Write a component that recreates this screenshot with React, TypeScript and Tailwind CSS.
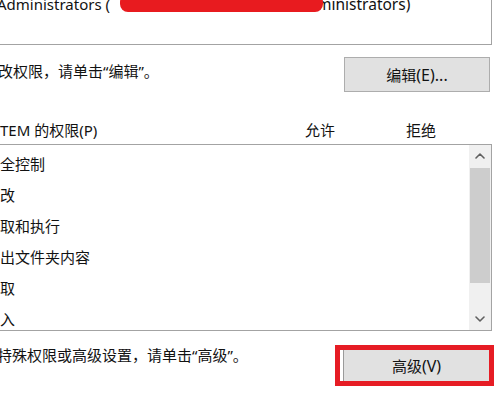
import React from "react";

const font = { fontFamily: '"Noto Sans", "Noto Sans CJK SC", sans-serif' };

function Chevron({ up }: { up?: boolean }) {
  return (
    <svg width="10" height="6" viewBox="0 0 10 6" fill="none">
      <path
        d={up ? "M1 5 L5 1 L9 5" : "M1 1 L5 5 L9 1"}
        stroke="#606060"
        strokeWidth="1.6"
        strokeLinecap="round"
        strokeLinejoin="round"
      />
    </svg>
  );
}

const perms = ["全控制", "改", "取和执行", "出文件夹内容", "取", "入"];

export default function App() {
  return (
    <div
      className="w-[500px] h-[400px] overflow-hidden bg-white text-[15px] text-[#121212]"
      style={font}
    >
      {/* owner box */}
      <div className="w-[492px] h-[45px] border-r border-b border-[#a3a3a3] overflow-hidden">
        <div className="flex items-start mt-[-6px] leading-[20px] whitespace-nowrap">
          <span className="w-[123px] ml-[-3px] shrink-0">Administrators (</span>
          <div className="relative z-10 w-[203px] h-[18px] shrink-0 bg-[#e81b1f] rounded-[8px]" />
          <span className="ml-[-6px] text-[15.5px]">ministrators)</span>
        </div>
      </div>

      {/* edit row */}
      <div className="flex items-start mt-[12px] h-[35px]">
        <span className="mt-[4px] ml-[-2px] leading-[20px] whitespace-nowrap">
          改权限，请单击“编辑”。
        </span>
        <div className="ml-auto mr-[10px] w-[146px] h-[35px] border border-[#adadad] bg-[#e1e1e1] flex items-center justify-center leading-[20px]">
          编辑<span className="text-[16px]">(E)...</span>
        </div>
      </div>

      {/* header */}
      <div className="flex mt-[28px] leading-[20px] whitespace-nowrap">
        <span className="w-[305px] shrink-0">TEM 的权限(P)</span>
        <span className="w-[101px] shrink-0">允许</span>
        <span>拒绝</span>
      </div>

      {/* list */}
      <div className="mt-[4px] w-[492px] h-[187px] border-t border-b border-r border-[#a3a3a3] flex">
        <div className="flex-1 pt-[4px] overflow-hidden">
          {perms.map((p) => (
            <div key={p} className="h-[31px] leading-[31px] whitespace-nowrap">
              {p}
            </div>
          ))}
        </div>
        <div className="w-[22px] bg-[#f0f0f0] flex flex-col">
          <div className="h-[22px] flex items-center justify-center">
            <Chevron up />
          </div>
          <div className="flex-1 px-[1px]">
            <div className="h-[115px] mt-[1px] bg-[#cdcdcd]" />
          </div>
          <div className="h-[22px] flex items-center justify-center">
            <Chevron />
          </div>
        </div>
      </div>

      {/* advanced row */}
      <div className="flex items-start mt-[14px]">
        <span className="ml-[-3px] leading-[20px] whitespace-nowrap">
          特殊权限或高级设置，请单击“高级”。
        </span>
        <div className="ml-auto mr-[6px] w-[159px] h-[41px] border-[5px] border-[#e61c24] flex">
          <div className="w-[3px] bg-white" />
          <div className="flex-1 border-l border-[#9a9a9a] bg-[#e1e1e1] flex items-center justify-center leading-[20px]">
            高级<span className="text-[16px]">(V)</span>
          </div>
        </div>
      </div>
    </div>
  );
}
